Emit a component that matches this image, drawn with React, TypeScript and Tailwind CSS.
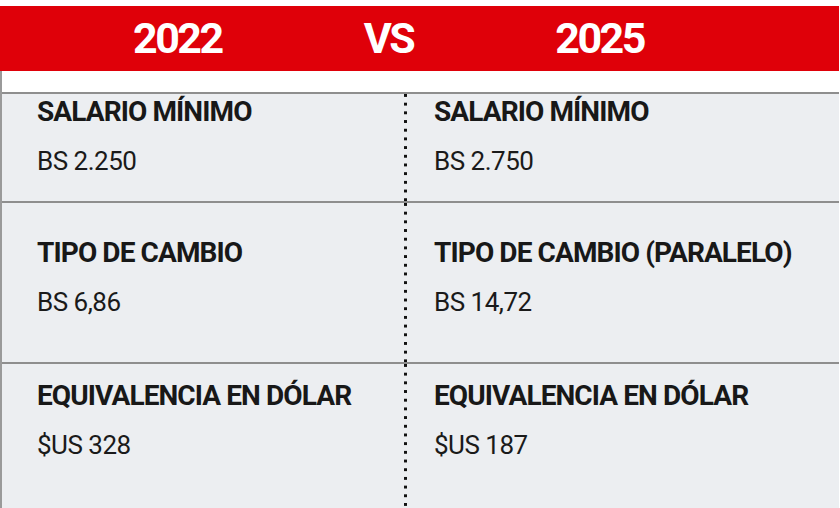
import React from "react";

const rows = [
  {
    pt: "pt-[2px]",
    pb: "pb-[25px]",
    left: { label: "SALARIO MÍNIMO", value: "BS 2.250" },
    right: { label: "SALARIO MÍNIMO", value: "BS 2.750" },
  },
  {
    pt: "pt-[34px]",
    pb: "pb-[45px]",
    left: { label: "TIPO DE CAMBIO", value: "BS 6,86" },
    right: { label: "TIPO DE CAMBIO (PARALELO)", value: "BS 14,72" },
  },
  {
    pt: "pt-[16px]",
    pb: "pb-[60px]",
    left: { label: "EQUIVALENCIA EN DÓLAR", value: "$US 328" },
    right: { label: "EQUIVALENCIA EN DÓLAR", value: "$US 187" },
  },
];

function Cell({ label, value }: { label: string; value: string }) {
  return (
    <div className="flex flex-col gap-[18px]">
      <div className="text-[28px] leading-[32px] font-bold tracking-[-0.9px] text-[#181818] whitespace-nowrap">
        {label}
      </div>
      <div className="text-[26px] leading-[30px] font-normal tracking-[-0.5px] text-[#1a1a1a] whitespace-nowrap">
        {value}
      </div>
    </div>
  );
}

export default function App() {
  return (
    <div className="w-[840px] h-[508px] bg-white overflow-hidden font-['Roboto',sans-serif]">
      <div className="mt-[6px] h-[65px] w-[839px] bg-[#df0009] flex items-center pl-[133px] gap-[142px] text-white font-bold text-[43px] leading-none tracking-[-2.5px]">
        <span>2022</span>
        <span>VS</span>
        <span>2025</span>
      </div>
      <div className="w-[839px] border-l-2 border-[#9a9a9a]">
        <div className="h-[21px] bg-white" />
        {rows.map((r, i) => (
          <div key={i} className="grid grid-cols-[402px_1fr] border-t-2 border-[#8e8e8e] bg-[#eceef1]">
            <div className={`pl-[35px] ${r.pt} ${r.pb}`}>
              <Cell {...r.left} />
            </div>
            <div
              className={`pl-[30px] ${r.pt} ${r.pb} bg-[linear-gradient(to_bottom,#111111_2.5px,transparent_2.5px)] bg-[length:2.5px_8.7px] bg-no-repeat bg-repeat-y bg-left-top`}
            >
              <Cell {...r.right} />
            </div>
          </div>
        ))}
      </div>
    </div>
  );
}
